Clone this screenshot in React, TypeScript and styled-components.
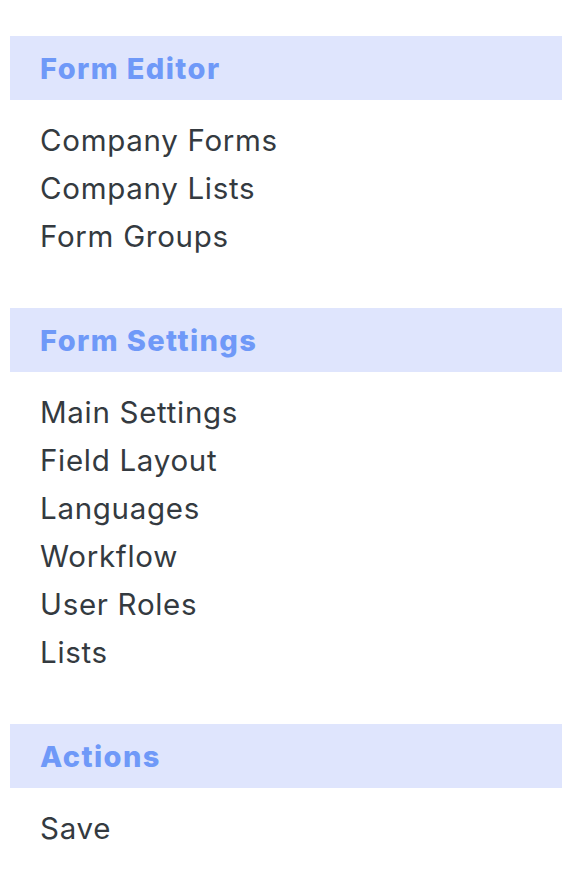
import { FC } from "react";
import styled, { createGlobalStyle } from "styled-components";

const GlobalStyle = createGlobalStyle`
	body {
		margin: 0;
		background: #ffffff;
		font-family: Inter, "Noto Sans", sans-serif;
	}
`;

const sections = [
	{ title: "Form Editor", items: ["Company Forms", "Company Lists", "Form Groups"] },
	{
		title: "Form Settings",
		items: ["Main Settings", "Field Layout", "Languages", "Workflow", "User Roles", "Lists"],
	},
	{ title: "Actions", items: ["Save"] },
];

const App: FC = () => {
	return (
		<>
			<GlobalStyle />
			<Sidebar>
				{sections.map((section) => (
					<Section key={section.title}>
						<SectionHeader>{section.title}</SectionHeader>
						<ItemList>
							{section.items.map((item) => (
								<Item key={item}>{item}</Item>
							))}
						</ItemList>
					</Section>
				))}
			</Sidebar>
		</>
	);
};

export default App;

const Sidebar = styled.nav`
	width: 552px;
	padding: 36px 12px 0 10px;
	display: flex;
	flex-direction: column;
`;

const Section = styled.section`
	display: flex;
	flex-direction: column;
`;

const SectionHeader = styled.h2`
	margin: 0;
	height: 64px;
	padding: 0 30px;
	display: flex;
	align-items: center;
	background: #dfe5fd;
	color: #6f99f8;
	font-size: 29px;
	font-weight: 800;
	letter-spacing: 1.4px;
`;

const ItemList = styled.ul`
	list-style: none;
	margin: 0;
	padding: 16px 30px 48px;
`;

const Item = styled.li`
	height: 48px;
	display: flex;
	align-items: center;
	color: #343a40;
	font-size: 29.5px;
	letter-spacing: 0.7px;
	cursor: pointer;
`;
